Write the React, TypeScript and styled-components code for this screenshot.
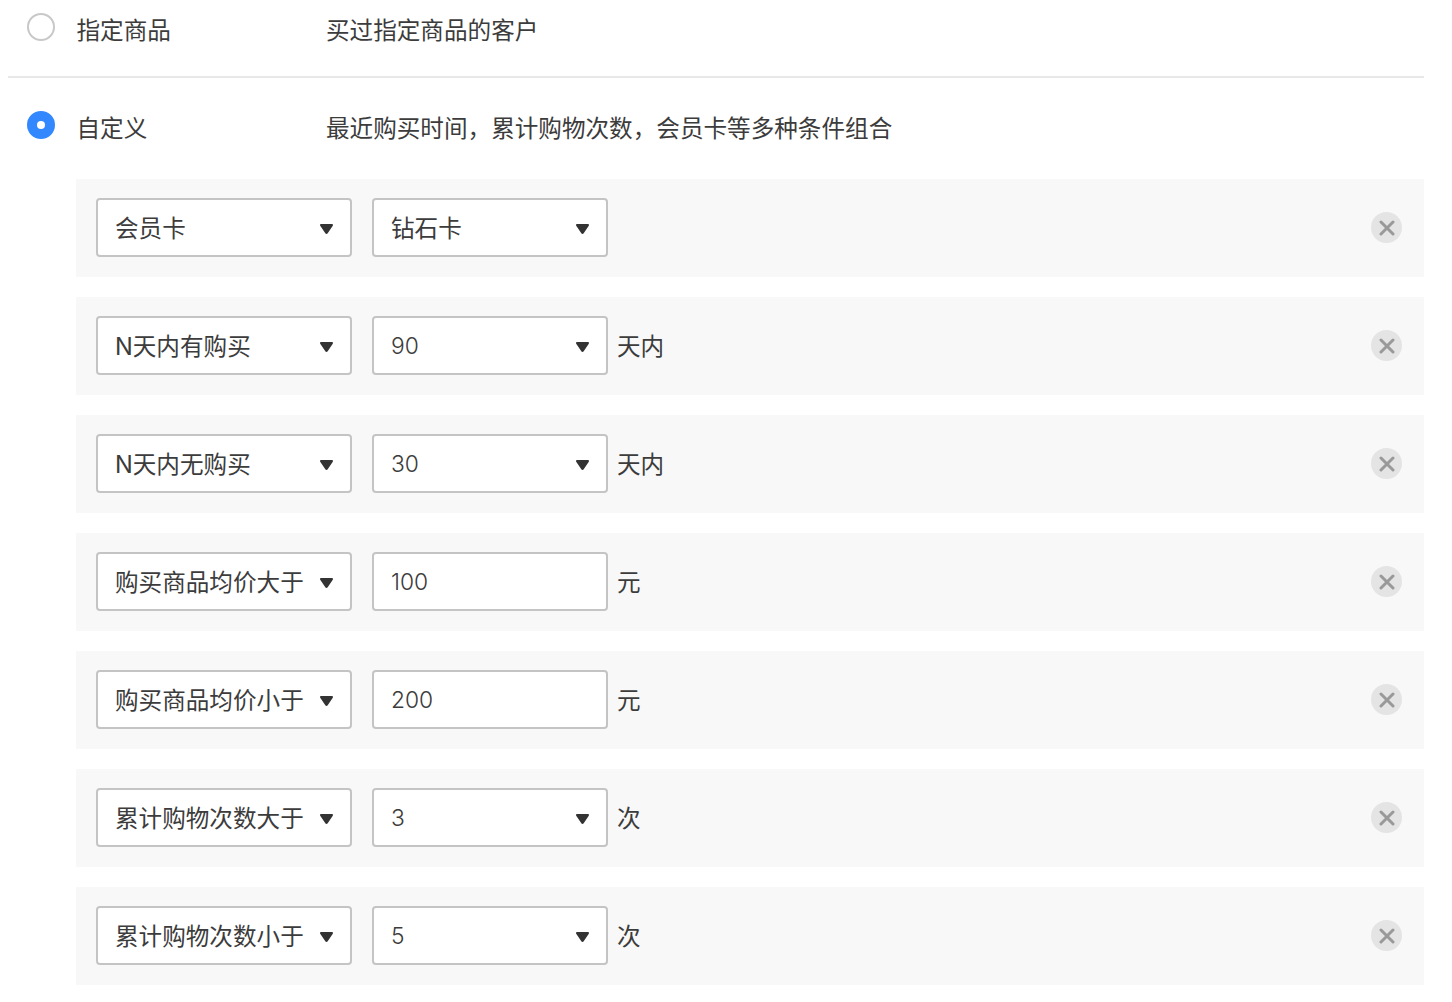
import React from "react";
import styled, { createGlobalStyle } from "styled-components";

const rules = [
  { type: "会员卡", value: "钻石卡", valueSelect: true, unit: "", numeric: false },
  { type: "N天内有购买", value: "90", valueSelect: true, unit: "天内", numeric: true },
  { type: "N天内无购买", value: "30", valueSelect: true, unit: "天内", numeric: true },
  { type: "购买商品均价大于", value: "100", valueSelect: false, unit: "元", numeric: true },
  { type: "购买商品均价小于", value: "200", valueSelect: false, unit: "元", numeric: true },
  { type: "累计购物次数大于", value: "3", valueSelect: true, unit: "次", numeric: true },
  { type: "累计购物次数小于", value: "5", valueSelect: true, unit: "次", numeric: true },
];

function Caret() {
  return (
    <CaretIcon viewBox="0 0 13 10">
      <path d="M1.2 0h10.600c1 0 1.500.9 1 1.700L7.700 9.300c-.6.9-1.800.9-2.400 0L.2 1.700C-.3.900.2 0 1.200 0z" />
    </CaretIcon>
  );
}

function App() {
  return (
    <Page>
      <GlobalStyle />
      <OptionRow>
        <Radio />
        <OptionName>指定商品</OptionName>
        <OptionDesc>买过指定商品的客户</OptionDesc>
      </OptionRow>
      <Divider />
      <OptionRow $second>
        <Radio $checked />
        <OptionName>自定义</OptionName>
        <OptionDesc>最近购买时间，累计购物次数，会员卡等多种条件组合</OptionDesc>
      </OptionRow>
      <RuleList>
        {rules.map((rule) => (
          <RuleRow key={rule.type}>
            <Field $width={256}>
              <FieldText>{rule.type}</FieldText>
              <Caret />
            </Field>
            <Field $width={236}>
              <FieldText $numeric={rule.numeric}>{rule.value}</FieldText>
              {rule.valueSelect && <Caret />}
            </Field>
            {rule.unit && <Unit>{rule.unit}</Unit>}
            <RemoveButton>
              <svg width="16" height="16" viewBox="0 0 16 16">
                <path d="M2 2l12 12M14 2L2 14" stroke="#999" strokeWidth="3" strokeLinecap="round" />
              </svg>
            </RemoveButton>
          </RuleRow>
        ))}
      </RuleList>
    </Page>
  );
}

export default App;

const GlobalStyle = createGlobalStyle`
  body {
    margin: 0;
    background: #fff;
    color: #3c3c3c;
    font-family: Inter, "Noto Sans CJK SC", sans-serif;
    font-size: 23.6px;
  }
`;

const Page = styled.div`
  padding: 0 28px 0 8px;
`;

const OptionRow = styled.div<{ $second?: boolean }>`
  display: flex;
  align-items: flex-start;
  height: ${({ $second }) => ($second ? "101px" : "76px")};
  padding: ${({ $second }) => ($second ? "33px" : "13px")} 0 0 19px;
  box-sizing: border-box;
`;

const Radio = styled.span<{ $checked?: boolean }>`
  position: relative;
  flex: none;
  width: 28px;
  height: 28px;
  border-radius: 50%;
  box-sizing: border-box;
  border: 2px solid ${({ $checked }) => ($checked ? "#3388ff" : "#c8c8c8")};
  background: ${({ $checked }) => ($checked ? "#3388ff" : "#fff")};
  &::after {
    content: "";
    display: ${({ $checked }) => ($checked ? "block" : "none")};
    position: absolute;
    top: 50%;
    left: 50%;
    width: 8px;
    height: 8px;
    margin: -4px 0 0 -4px;
    border-radius: 50%;
    background: #fff;
  }
`;

const OptionName = styled.span`
  flex: none;
  width: 249.5px;
  margin: 0.5px 0 0 21.5px;
  line-height: 34px;
`;

const OptionDesc = styled.span`
  margin-top: 0.5px;
  line-height: 34px;
`;

const Divider = styled.div`
  height: 2px;
  background: #e8e8e8;
`;

const RuleList = styled.div`
  display: flex;
  flex-direction: column;
  gap: 20px;
  margin-left: 68px;
`;

const RuleRow = styled.div`
  display: flex;
  align-items: center;
  height: 98px;
  padding: 0 22px 1px 20px;
  box-sizing: border-box;
  background: #f8f8f8;
`;

const Field = styled.div<{ $width: number }>`
  display: flex;
  align-items: center;
  justify-content: space-between;
  box-sizing: border-box;
  width: ${({ $width }) => $width}px;
  height: 59px;
  margin-right: 20px;
  padding: 0 17px;
  border: 2px solid #c4c4c4;
  border-radius: 4px;
  background: #fff;
  white-space: nowrap;
`;

const FieldText = styled.span<{ $numeric?: boolean }>`
  margin-top: ${({ $numeric }) => ($numeric ? "0" : "2px")};
  line-height: 34px;
  font-size: ${({ $numeric }) => ($numeric ? "22.8px" : "inherit")};
  font-weight: ${({ $numeric }) => ($numeric ? 300 : 400)};
`;

const CaretIcon = styled.svg`
  flex: none;
  width: 13px;
  height: 10px;
  margin-top: 2px;
  fill: #333;
`;

const Unit = styled.span`
  margin: -2px 0 0 -11px;
`;

const RemoveButton = styled.span`
  display: flex;
  align-items: center;
  justify-content: center;
  width: 31px;
  height: 31px;
  margin-left: auto;
  border-radius: 50%;
  background: #e4e4e4;
`;
